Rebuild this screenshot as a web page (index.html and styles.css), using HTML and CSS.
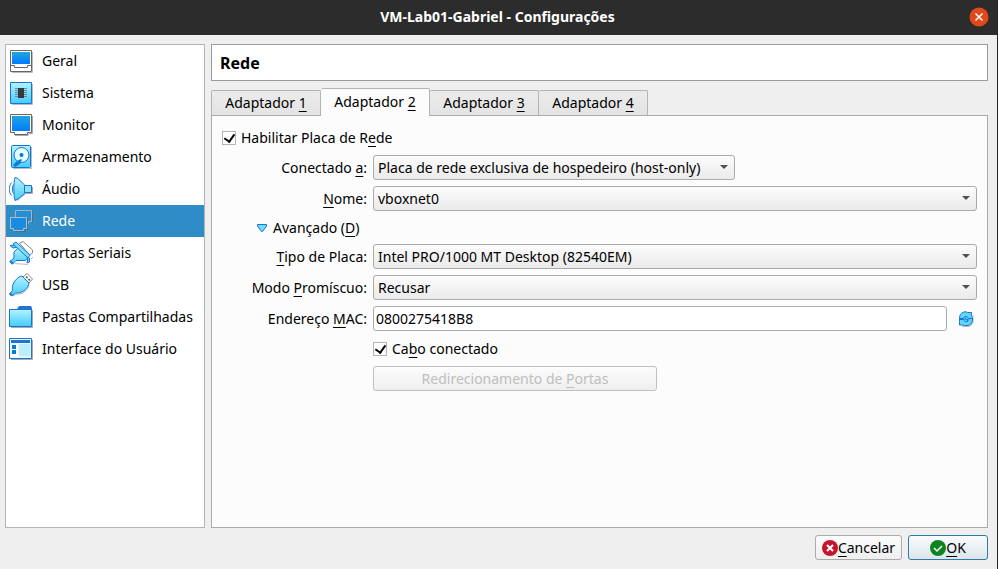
FILE: index.html
```html
<!DOCTYPE html>
<html lang="pt-BR">
<head>
<meta charset="utf-8">
<title>VM-Lab01-Gabriel - Configurações</title>
<link rel="stylesheet" href="styles.css">
</head>
<body>
<svg width="0" height="0" class="defs" aria-hidden="true">
  <defs>
    <linearGradient id="screen" x1="0" y1="0" x2="0" y2="1"><stop offset="0" stop-color="#22a4dc"/><stop offset="1" stop-color="#007cff"/></linearGradient>
    <linearGradient id="sky" x1="0" y1="0" x2="0" y2="1"><stop offset="0" stop-color="#b4f2ff"/><stop offset="1" stop-color="#44ccff"/></linearGradient>
  </defs>
</svg>
<div class="dialog">
  <header class="titlebar">
    <h1>VM-Lab01-Gabriel - Configurações</h1>
    <button class="close" aria-label="Fechar"><svg width="20" height="20" viewBox="0 0 20 20"><circle cx="10" cy="10" r="9.5" fill="#e2491a"/><path d="M6.5 6.500l7 7M13.500 6.500l-7 7" stroke="#fff" stroke-width="1.500"/></svg></button>
  </header>
  <div class="body">
    <nav class="sidebar">
      <a href="#geral"><svg viewBox="0 0 24 24"><path d="M3 23.500h20.500V3" fill="none" stroke="#bbb"/><path d="M1.500 1.500h21v21h-21z" fill="#fff" stroke="#666"/><path d="M3 3h18v12H3z" fill="url(#screen)"/><path d="M2 16.500h3.500v2h13v-2H22" fill="none" stroke="#666"/></svg>Geral</a>
      <a href="#sistema"><svg viewBox="0 0 24 24"><path d="M3 23.500h20.500V3" fill="none" stroke="#bbb"/><path d="M1.500 1.500h21v21h-21z" fill="url(#sky)" stroke="#1874d2"/><path d="M6 7.500h12M6 9.500h12M6 11.500h12M6 13.500h12M6 15.500h12" stroke="#668d9c"/><path d="M9 7h6v10H9z" fill="#333a40"/></svg>Sistema</a>
      <a href="#monitor"><svg viewBox="0 0 24 24"><path d="M23.500 3v17.500H20l-1 2H6" fill="none" stroke="#aaa"/><path d="M1.500 1.500h21v18h-4v2h-13v-2h-4z" fill="#fff" stroke="#666"/><path d="M3 3h18v15H3z" fill="url(#screen)"/></svg>Monitor</a>
      <a href="#armazenamento"><svg viewBox="0 0 24 24"><path d="M4 23.500h18.500V2" fill="none" stroke="#bbb"/><rect x="2.500" y=".5" width="19" height="22" rx="1" fill="url(#sky)" stroke="#1874d2"/><circle cx="12.500" cy="10" r="7.500" fill="#e4fbff" stroke="#1874d2"/><circle cx="12.500" cy="10" r="2" fill="#0879d0"/><path d="M12 14l-4 2-4 4 2 2 5-3 2-4z" fill="#117cd3"/></svg>Armazenamento</a>
      <a href="#audio"><svg viewBox="0 0 24 24"><path d="M8 23.500l9-7h6.500V10" fill="none" stroke="#aaa"/><path d="M6 .5l3 1 6.500 6.500v8.500L9 22l-3 1.500C4.500 18 4.500 6 6 .5z" fill="url(#sky)" stroke="#1874d2"/><path d="M15.500 8.500h7v7h-7z" fill="#8ce2ff" stroke="#1874d2"/><path d="M4.500 7.500c-1.500 2-1.500 7 0 9M2.500 5.500c-3 4-3 9 0 13" fill="none" stroke="#1874d2"/></svg>Áudio</a>
      <a href="#rede" class="current" aria-current="page"><svg viewBox="0 0 24 24"><path d="M6.500 1.500h16v11h-3v2h-9v-2h-4z" fill="#238ddb" stroke="#a9b3ba"/><path d="M1.500 8.500h16v11h-3v2h-10v-2h-3z" fill="#188be2" stroke="#b2bcc3"/><path d="M6 22.500h10v-2h2.500V9M23.500 3v10.500" fill="none" stroke="#47718e"/></svg>Rede</a>
      <a href="#portas"><svg viewBox="0 0 24 24"><path d="M6 22.500l13 1M22 18l2-2" stroke="#bbb"/><path d="M10.500 2l3.500-1.500L23.500 9v3l-3 2z" fill="#fff" stroke="#888"/><path d="M1 4.500L4 7l6-1 9 10-1 6 2.500-1v-4L6 4z" fill="#65d5ff" stroke="#1874d2"/><path d="M9.500 6.500L5 11v6l-4 3.500L3.500 23 7 19.500h9l3.500-3z" fill="url(#sky)" stroke="#1874d2"/><path d="M4 3l3-2 14 13-2 3z" fill="#7edfff" stroke="#1874d2"/><path d="M1 20l3 3" stroke="#2472d2" stroke-width="2"/></svg>Portas Seriais</a>
      <a href="#usb"><svg viewBox="0 0 24 24"><path d="M14 4l4-3.500L23.500 6 20 10z" fill="#fff" stroke="#888"/><path d="M17 3.500l1.500 1.500M19.500 6L21 7.500" stroke="#555" stroke-width="1.500"/><path d="M4 23l3-2c6 1 11-3 13-8" fill="none" stroke="#bbb"/><path d="M11 3.500L13 3l7 7-.5 2c-2 5-7 8.500-13 8L3 23l-2.500-2 3-3.500c-1-5 2-11 7.500-14z" fill="url(#sky)" stroke="#1874d2"/><path d="M1 20.500l2 2" stroke="#2377c9" stroke-width="2"/></svg>USB</a>
      <a href="#pastas"><svg viewBox="0 0 24 24"><path d="M2 22.500h21.500V5" fill="none" stroke="#aaa"/><path d="M8 4l2-3h12l1 2v3H8z" fill="#2472d2"/><path d="M.5 4.500h22v17H.5z" fill="url(#sky)" stroke="#1874d2"/></svg>Pastas Compartilhadas</a>
      <a href="#interface"><svg viewBox="0 0 24 24"><path d="M2 22.500h21.500V3" fill="none" stroke="#aaa"/><path d="M.5 1.500h22v20H.5z" fill="#e4faff" stroke="#1874d2"/><path d="M2 3h19v3H2z" fill="#2472d2"/><path d="M2 7h7v13H2z" fill="#fff"/><path d="M10 7h11v12H10z" fill="#bdeeff"/><path d="M3 8h4v4H3zM3 13h4v4H3z" fill="#0879d0"/></svg>Interface do Usuário</a>
    </nav>
    <main>
      <h2>Rede</h2>
      <div class="tabs" role="tablist">
        <button role="tab">Adaptador <u>1</u></button>
        <button role="tab" class="active" aria-selected="true">Adaptador <u>2</u></button>
        <button role="tab">Adaptador <u>3</u></button>
        <button role="tab">Adaptador <u>4</u></button>
      </div>
      <section class="panel">
        <label class="check enable"><input type="checkbox" checked><span>Habilitar Placa de R<u>e</u>de</span></label>
        <div class="form">
          <label class="name" for="attached">Conectado <u>a</u>:</label>
          <div class="select fit"><select id="attached"><option>Placa de rede exclusiva de hospedeiro (host-only)</option></select></div>
          <label class="name" for="name"><u>N</u>ome:</label>
          <div class="select"><select id="name"><option>vboxnet0</option></select></div>
          <button class="advanced"><svg width="12" height="10" viewBox="0 0 12 10"><path d="M1.500 1.500h9v1.500L6.500 8.500h-1L1.500 3z" fill="#71dcff" stroke="#1874d2" stroke-linejoin="round"/></svg><span>Avançado (<u>D</u>)</span></button>
          <label class="name" for="type"><u>T</u>ipo de Placa:</label>
          <div class="select"><select id="type"><option>Intel PRO/1000 MT Desktop (82540EM)</option></select></div>
          <label class="name" for="promiscuous">Modo <u>P</u>romíscuo:</label>
          <div class="select"><select id="promiscuous"><option>Recusar</option></select></div>
          <label class="name" for="mac">Endereço <u>M</u>AC:</label>
          <div class="mac"><input id="mac" type="text" value="0800275418B8"><button class="refresh" aria-label="Gerar novo endereço"><svg width="16" height="16" viewBox="0 0 16 16"><path d="M4 15.500h8l3-4V4" fill="none" stroke="#bbb"/><path d="M1.500 7.500C1.500 3 4 .8 8 .8l1.500.7h4v3c1.500 3 1.500 6-.5 8.500-2 2-6 2-8.500 1h-3v-3.500z" fill="#62d4ff" stroke="#1874d2"/><path d="M1.500 7.500h4C6 5 9 4.500 10.500 7.500h4M2 8.500h4c.5 3 3.500 3 5 0M7.500 6.500L7 8l3 .5-1 2" fill="none" stroke="#1874d2"/></svg></button></div>
          <label class="check cable"><input type="checkbox" checked><span>Ca<u>b</u>o conectado</span></label>
          <button class="btn forward" disabled><span>Redirecionamento de <u>P</u>ortas</span></button>
        </div>
      </section>
    </main>
  </div>
  <footer>
    <button class="btn"><svg width="16" height="16" viewBox="0 0 16 16"><circle cx="8" cy="8" r="8" fill="#c7162b"/><path d="M5 5l6 6M11 5l-6 6" stroke="#fff" stroke-width="2"/></svg><span><u>C</u>ancelar</span></button>
    <button class="btn ok"><svg width="16" height="16" viewBox="0 0 16 16"><circle cx="8" cy="8" r="8" fill="#0e8420"/><path d="M4 8l3 3 5-5" fill="none" stroke="#fff" stroke-width="1.500"/></svg><span><u>O</u>K</span></button>
  </footer>
</div>
</body>
</html>
```
FILE: styles.css
```css
* { box-sizing: border-box; }
body { margin: 0; background: #efefef; color: #000; font: 14px/20px "Noto Sans", "Open Sans", sans-serif; }
button, input, select { font: inherit; color: inherit; margin: 0; padding: 0; }
button { border: 0; background: none; }
svg { display: block; flex: none; }
.defs { position: absolute; }
u { text-decoration-thickness: 1px; text-underline-offset: 3px; text-decoration-skip-ink: none; }

.dialog { min-height: 100vh; display: flex; flex-direction: column; border-right: 1px solid #242424; }
.titlebar { display: flex; align-items: center; height: 35px; padding: 0 8px 2px 26px; background: #2c2c2c; color: #fff; }
.titlebar h1 { flex: 1; margin: 0; font-size: 14px; line-height: 20px; text-align: center; }

.body { flex: 1; display: flex; gap: 6px; padding: 9px 9px 0 5px; }
.sidebar { flex: none; width: 200px; border: 1px solid #b4b4b4; background: #fff; }
.sidebar a { display: flex; align-items: center; gap: 9px; height: 32px; padding-left: 3px; color: #000; text-decoration: none; white-space: nowrap; }
.sidebar svg { width: 24px; height: 24px; }
.sidebar .current { background: #308cc6; color: #fff; }

main { flex: 1; min-width: 0; display: flex; flex-direction: column; }
h2 { margin: 0 0 8px; padding: 8px; border: 1px solid #9b9b9b; background: #fff; font-size: 16px; line-height: 20px; height: 37px; }
.tabs { display: flex; align-items: flex-end; height: 26px; }
.tabs button { width: 109px; height: 25px; border: 1px solid #b4b4b4; border-left-width: 0; border-bottom: 0; border-radius: 2px 2px 0 0; background: linear-gradient(#ebebeb, #e4e4e4); }
.tabs button:first-child { width: 110px; border-left-width: 1px; }
.tabs .active { position: relative; z-index: 1; height: 28px; margin-bottom: -1px; padding-bottom: 2px; background: #fcfcfc; }
.panel { flex: 1; padding: 10px; border: 1px solid #ababab; background: #fcfcfc; }

.check { display: flex; align-items: center; gap: 5px; width: max-content; }
.check input { appearance: none; display: grid; place-items: center; width: 14px; height: 14px; border: 1px solid #b4b4b4; background: #fff; }
.check input:checked::before { content: ""; width: 5px; height: 8px; margin-bottom: 2px; border: solid #000; border-width: 0 2px 2px 0; transform: rotate(35deg); }
.enable { height: 23px; margin-bottom: 6px; }
.form { display: grid; grid-template-columns: 145px 1fr; gap: 6px; }
.name { text-align: right; line-height: 25px; white-space: nowrap; }
.select { position: relative; height: 25px; }
.select.fit { width: 362px; }
.select select { appearance: none; width: 100%; height: 25px; padding: 0 24px 0 4px; border: 1px solid #ababab; border-radius: 3px; background: linear-gradient(#fcfcfc, #eaeaea); }
.select::after { content: ""; position: absolute; right: 7px; top: 10px; border: 4px solid transparent; border-top-color: #505050; border-bottom-width: 0; pointer-events: none; }
.advanced { grid-column: 1 / -1; display: flex; align-items: center; gap: 5px; height: 21px; margin-left: 34px; width: max-content; }
.mac { display: flex; align-items: center; gap: 11px; }
.mac input { flex: 1; min-width: 0; height: 25px; padding: 0 2px; border: 1px solid #ababab; border-radius: 3px; background: #fff; }
.refresh { margin-right: 3px; }
.cable { grid-column: 2; height: 23px; }
.btn { display: flex; align-items: center; justify-content: center; height: 25px; border: 1px solid #ababab; border-radius: 3px; background: linear-gradient(#fcfcfc, #efefef); }
.forward { grid-column: 2; width: 284px; color: #bebebe; border-color: #bfbfbf; }

footer { display: flex; justify-content: flex-end; gap: 6px; padding: 7px 9px 9px; }
footer .btn { width: 87px; }
footer .ok { width: 80px; border-color: #2f7ba5; background: linear-gradient(#fafcfd, #dce5eb); }
```
